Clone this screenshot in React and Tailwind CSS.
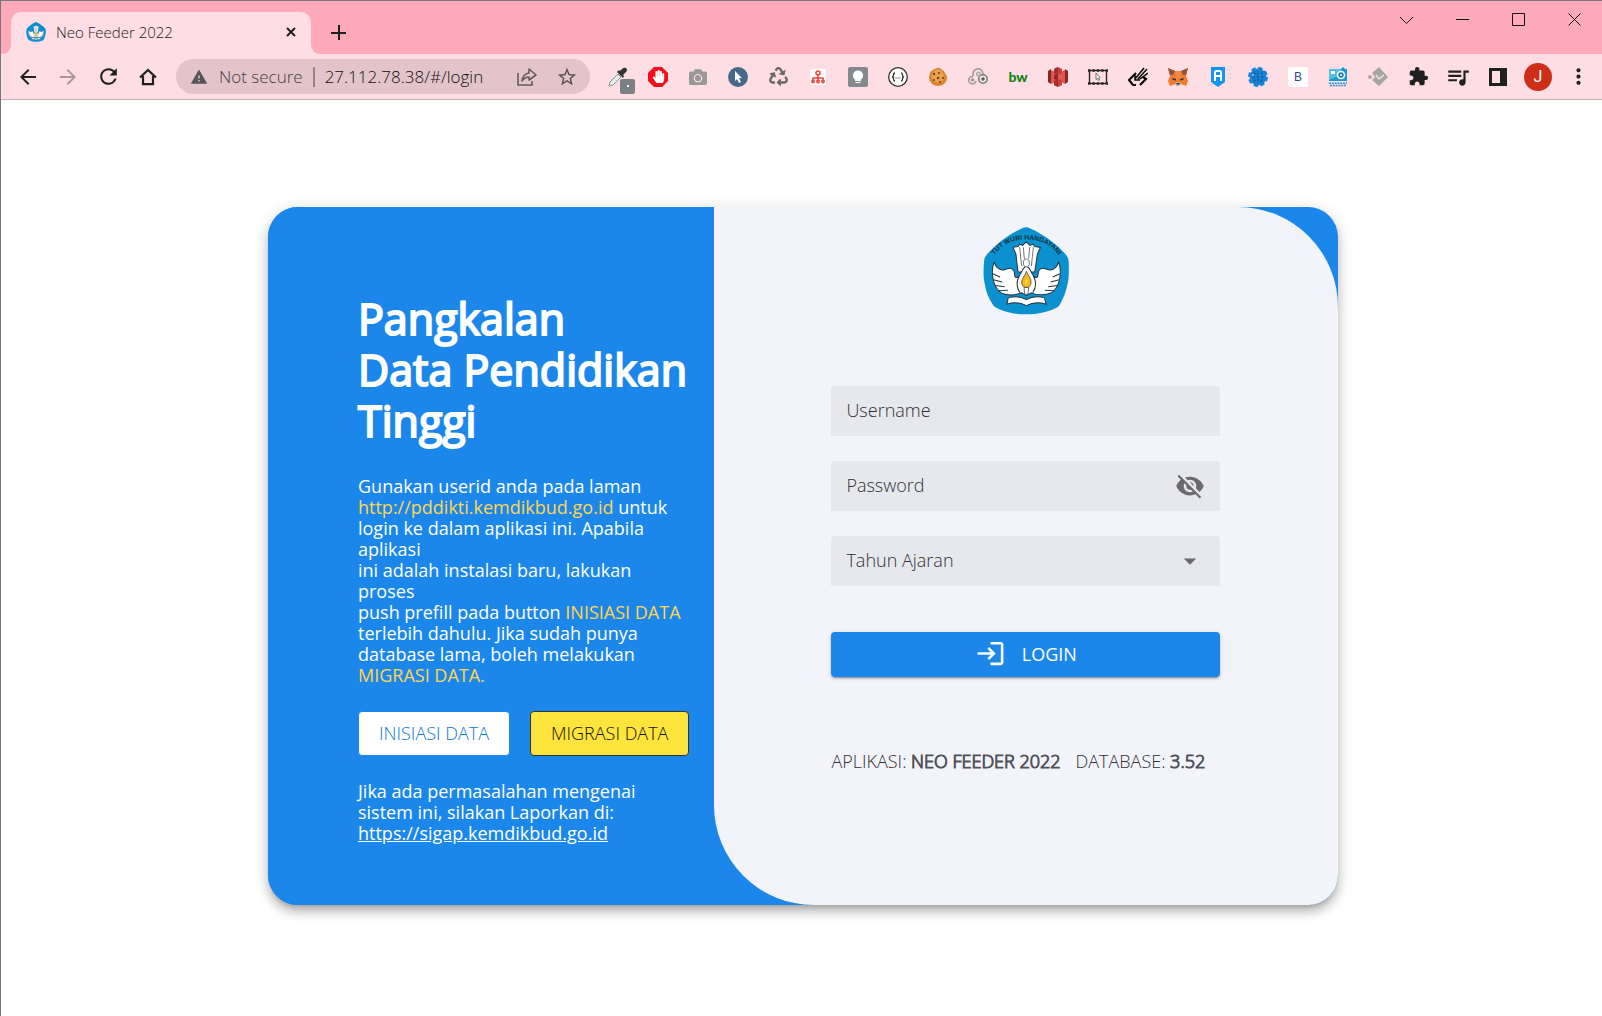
import { useState } from "react"
import {
  MdArrowBack,
  MdArrowDropDown,
  MdArrowForward,
  MdExtension,
  MdLogin,
  MdMoreVert,
  MdQueueMusic,
  MdRefresh,
  MdStarBorder,
  MdVisibility,
  MdVisibilityOff,
  MdWarning,
} from "react-icons/md"
import { FaCamera, FaHandPaper, FaRecycle } from "react-icons/fa"

function Logo({ className, label, motto }) {
  return (
    <svg viewBox="72 52 256 262" className={className} role="img" aria-label={label}>
      <path
        d="M186 57 Q200 49 214 57 C250 72 290 102 318 133 Q327 143 327 155 C328 180 328 200 325 216 C320 243 312 265 300 284 Q296 292 286 295 C260 307 235 312 200 312 C165 312 140 307 116 295 Q106 292 102 284 C88 265 80 243 76 216 C73 200 73 180 75 155 Q75 143 84 133 C112 102 150 72 186 57Z"
        fill="#0b90d0"
      />
      {motto && (
        <>
          <path id="motto" d="M98 152 C130 68 272 68 304 152" fill="none" />
          <text fontFamily="Liberation Sans" fontWeight="700" fontSize="20" fill="#12303f">
            <textPath href="#motto" startOffset="50%" textAnchor="middle">
              {motto}
            </textPath>
          </text>
        </>
      )}
      <g fill="#fff" stroke="#26323c" strokeWidth="3" strokeLinejoin="round">
        <path d="M161 112 L176 110 L181 103 L190 107 L201 96 L212 107 L221 103 L226 110 L243 113 L234 132 L226 186 L176 186 L170 132Z" />
        <path d="M105 156 C112 178 128 184 142 177 C154 171 166 177 166 192 C166 204 174 207 180 197 L192 176 L201 166 L210 176 L222 197 C228 207 236 204 236 192 C236 177 248 171 260 177 C276 184 290 178 297 156 C308 186 301 231 276 248 C256 257 231 255 216 248 L201 256 L187 248 C169 255 145 257 126 248 C101 231 94 186 105 156Z" />
        <path d="M143 282 L147 263 C165 258 185 259 201 268 C217 259 237 258 255 263 L260 282 C238 275 218 277 201 286 C184 277 164 275 143 282Z" />
        <path d="M194 232 H208 L206 252 H196Z" strokeWidth="2" />
        <ellipse cx="201" cy="159" rx="9" ry="12" strokeWidth="2" />
      </g>
      <g fill="none" stroke="#26323c" strokeWidth="3">
        <path d="M181 112 L187 168 M192 112 L195 146 M211 112 L208 146 M222 112 L216 168" strokeWidth="2" />
        <path d="M101 191 L123 201 M103 209 L129 216 M108 226 L136 230 M118 242 L146 240 M301 191 L279 201 M299 209 L273 216 M294 226 L266 230 M284 242 L256 240" />
        <path d="M182 248 Q166 224 180 197 M220 248 Q236 224 222 197" />
      </g>
      <path
        d="M201 184 C207 199 216 203 215 217 C214 229 207 232 201 232 C194 232 188 228 187 217 C187 204 197 199 201 184Z"
        fill="#f8b81f"
        stroke="#26323c"
        strokeWidth="2"
      />
      <path d="M201 205 Q208 216 201 224 Q195 217 201 205Z" fill="#ffdc55" />
    </svg>
  )
}

const extensions = [
  {
    name: "Color picker",
    icon: (
      <span className="relative block h-5 w-5">
        <svg viewBox="0 0 20 20" className="h-5 w-5">
          <path d="M1 19 L2 15 L10 7 L13 10 L5 18Z" fill="#e8efee" stroke="#86918f" />
          <path d="M9 5 L15 11 L16 9 L15 8 L18 5 Q20 3 18 1 Q16 0 14 2 L12 4 L11 3Z" fill="#333" />
        </svg>
        <span className="absolute top-3 left-3 flex h-[15px] w-[15px] items-center justify-center rounded-xs bg-[#7b8085]">
          <span className="h-[2px] w-[2px] bg-white" />
        </span>
      </span>
    ),
  },
  {
    name: "Ad blocker",
    icon: (
      <span className="relative flex h-5 w-5 items-center justify-center text-white">
        <svg viewBox="0 0 20 20" className="absolute h-5 w-5">
          <path d="M6 0H14L20 6V14L14 20H6L0 14V6Z" fill="#f70d1a" />
        </svg>
        <FaHandPaper size={13} className="relative" />
      </span>
    ),
  },
  { name: "Screenshot", icon: <FaCamera size={18} color="#999" /> },
  {
    name: "Cursor",
    icon: (
      <svg viewBox="0 0 20 20" className="h-5 w-5">
        <circle cx="10" cy="10" r="10" fill="#46698a" />
        <path d="M7 4 L14 11 L11 11 L13 15 L11 16 L9 12 L7 14Z" fill="#fff" />
      </svg>
    ),
  },
  { name: "Recycle", icon: <FaRecycle size={19} color="#6b6668" /> },
  {
    name: "Sitemap",
    icon: (
      <svg viewBox="0 0 16 16" className="h-4 w-4">
        <rect width="16" height="16" rx="2" fill="#fff" />
        <g fill="none" stroke="#ee4136" strokeWidth="1.5">
          <circle cx="8" cy="4" r="2" />
          <path d="M8 6V11M3 11V9H13V11" />
          <circle cx="3" cy="12.5" r="1.2" />
          <circle cx="8" cy="12.5" r="1.2" />
          <circle cx="13" cy="12.5" r="1.2" />
        </g>
      </svg>
    ),
  },
  {
    name: "Light switch",
    icon: (
      <span className="flex h-5 w-5 items-center justify-center rounded-xs bg-[#83898d]">
        <svg viewBox="0 0 20 20" className="h-5 w-5" fill="#fff">
          <path d="M10 3.5A5 5 0 0 1 13 12.5V14H7V12.5A5 5 0 0 1 10 3.5ZM7.5 15H12.5V16H7.5Z" />
        </svg>
      </span>
    ),
  },
  {
    name: "JSON viewer",
    icon: (
      <svg viewBox="0 0 20 20" className="h-5 w-5" fill="none" stroke="#333">
        <circle cx="10" cy="10" r="9.3" fill="#fff" strokeWidth="1.3" />
        <path d="M7 6Q5.5 6 5.5 8Q5.5 10 4 10Q5.5 10 5.5 12Q5.5 14 7 14M13 6Q14.5 6 14.5 8Q14.5 10 16 10Q14.5 10 14.5 12Q14.5 14 13 14" strokeWidth="1.3" />
        <path d="M7.5 11H8.5M9.5 11H10.5M11.5 11H12.5" />
      </svg>
    ),
  },
  {
    name: "Cookie editor",
    icon: (
      <svg viewBox="0 0 20 20" className="h-5 w-5">
        <path d="M9 1Q12 0 14 3Q16 3 17 6Q19 8 19 12Q17 19 10 19Q2 18 1 11Q1 3 9 1Z" fill="#db842f" />
        <path d="M7 3Q12 1 14 5Q17 8 16 12Q13 16 7 15Q2 11 4 7Z" fill="#eda14c" />
        <g fill="#70401d">
          <circle cx="6" cy="7" r="1.2" />
          <circle cx="11" cy="6" r="1" />
          <circle cx="10" cy="11" r="1.2" />
          <circle cx="15" cy="11" r="1.1" />
          <circle cx="6" cy="13" r="1" />
          <circle cx="12" cy="15" r="1" />
        </g>
      </svg>
    ),
  },
  {
    name: "Cloud rings",
    icon: (
      <svg viewBox="0 0 20 20" className="h-5 w-5" fill="none" strokeWidth="1.5">
        <path d="M8 14A3.7 3.7 0 1 1 5 9.5M5.5 9A5 5 0 1 1 15 7" stroke="#999" />
        <circle cx="15" cy="12" r="4.2" stroke="#777" fill="#f4e8eb" />
        <circle cx="10.5" cy="7" r="1.8" stroke="#aaa" />
        <circle cx="4.5" cy="13" r="1" stroke="#999" />
        <circle cx="15" cy="12" r="1" stroke="#555" />
      </svg>
    ),
  },
  {
    name: "BuiltWith",
    icon: <span className="font-[Lato] text-sm leading-5 font-black text-[#168414]">bw</span>,
  },
  {
    name: "S3 browser",
    icon: (
      <svg viewBox="0 0 20 20" className="h-5 w-5">
        <path d="M0 4L3 2V17L0 15ZM20 4L17 2V17L20 15Z" fill="#8c2726" />
        <path d="M3 3L7 5V15L3 17ZM17 3L13 5V15L17 17Z" fill="#dc5652" />
        <path d="M7 6H13V14H7Z" fill="#c03a37" />
        <path d="M10 0L14 2V6L10 7L6 6V2ZM10 20L14 18V14L10 13L6 14V18Z" fill="#ce3f3c" />
        <path d="M6 8L10 7V13L6 12Z" fill="#932a28" />
        <path d="M10 7L14 8V12L10 13Z" fill="#e25b56" />
        <path d="M10 0V7L6 6V2ZM10 20V13L6 14V18Z" fill="#a32f2d" />
      </svg>
    ),
  },
  {
    name: "Area capture",
    icon: (
      <svg viewBox="0 0 20 18" className="h-[18px] w-5">
        <rect x="1.5" y="2.5" width="17" height="13" fill="none" stroke="#282525" strokeWidth="1.4" />
        <path d="M0 2.5H20M0 15.5H20" stroke="#282525" strokeWidth="2.6" strokeDasharray="2.4 2" />
        <path d="M8 5L12 9.5L10.5 10L11.5 12L10.5 12.5L9.5 10.5L8 11.5Z" fill="#fff" stroke="#555" strokeWidth=".8" />
      </svg>
    ),
  },
  {
    name: "Quick edit",
    icon: (
      <svg viewBox="0 0 20 20" className="h-5 w-5" fill="none" stroke="#080808">
        <path d="M8 6L1 13L5 18H8M12 18L18 12L15 10" strokeWidth="2.2" />
        <path d="M7 12L16 1M10 12L19 2M12 12L20 6M7 8V13H12" strokeWidth="1.5" />
      </svg>
    ),
  },
  {
    name: "MetaMask",
    icon: (
      <svg viewBox="0 0 20 20" className="h-5 w-5">
        <path d="M0 1L7 4H13L20 1L18 9L20 14L18 19L13 17L11 19H9L7 17L2 19L0 14L2 9Z" fill="#f27c2c" />
        <path d="M0 1L7 4L5 8L2 8ZM20 1L13 4L15 8L18 8Z" fill="#92553a" />
        <path d="M7 4H13L12 12H8Z" fill="#e98945" />
        <path d="M4 11L8 12V13.5L5 13ZM16 11L12 12V13.5L15 13ZM8 16H12L11 18H9Z" fill="#293541" />
        <path d="M7 17L8 15H12L13 17L11 19H9Z" fill="#c5b7ab" />
        <path d="M8 16H12L11 17.5H9Z" fill="#263440" />
      </svg>
    ),
  },
  {
    name: "Ronin wallet",
    icon: (
      <svg viewBox="0 0 16 20" className="h-5 w-4">
        <path d="M1 0H15V15L8 20L1 15Z" fill="#1194f2" />
        <path d="M5 14V5L6 4H10L11 5V14M5 9H11" stroke="#fff" strokeWidth="2" fill="none" />
      </svg>
    ),
  },
  {
    name: "Web settings",
    icon: (
      <svg viewBox="0 0 20 20" className="h-5 w-5">
        <circle cx="10" cy="10" r="8.5" fill="none" stroke="#1585db" strokeWidth="3" strokeDasharray="4.2 2.47" />
        <circle cx="10" cy="10" r="8.4" fill="#1684d7" />
        <path d="M4 10H16M10 4V16M5 6Q10 9 15 6M5 14Q10 11 15 14M7 4Q4 10 7 16M13 4Q16 10 13 16" fill="none" stroke="#174f9d" strokeWidth=".6" />
        <circle cx="5" cy="8" r=".8" fill="#fff" />
        <circle cx="12" cy="8" r="1" fill="#18b77b" />
      </svg>
    ),
  },
  {
    name: "Bookmarks",
    icon: (
      <span className="flex h-5 w-5 items-center justify-center rounded-xs bg-white font-['Liberation_Sans'] text-xs leading-5 text-[#3b459d]">
        B
      </span>
    ),
  },
  {
    name: "Image capture",
    icon: (
      <svg viewBox="0 0 20 20" className="h-5 w-5">
        <path d="M1 2H13L15 0L17 2H19V14H1Z" fill="#159bd0" />
        <path d="M1 2H13V8L1 13Z" fill="#55bce2" />
        <rect x="3" y="4" width="4" height="3" fill="#fff" />
        <circle cx="13" cy="8" r="3.5" fill="#187bae" stroke="#fff" strokeWidth="1.6" />
        <circle cx="13" cy="8" r="1" fill="#fff" />
        <path d="M1 16.2H19M2 18.5H18" stroke="#2198c8" strokeWidth="1.6" strokeDasharray="2 .8" />
      </svg>
    ),
  },
  {
    name: "Redirect",
    icon: (
      <svg viewBox="0 0 20 20" className="h-5 w-5">
        <path d="M11 0L20 10L11 19L4 13L7 10L4 6Z" fill="#a5a5a5" />
        <path d="M8 8L11 12L16 8" fill="none" stroke="#f8dce2" strokeWidth="1.5" />
        <circle cx="2" cy="10" r="2" fill="#aaa" />
      </svg>
    ),
  },
  { name: "Extensions", icon: <MdExtension size={21} /> },
  { name: "Media control", icon: <MdQueueMusic size={26} /> },
  {
    name: "Side panel",
    icon: (
      <svg viewBox="0 0 18 18" className="h-[18px] w-[18px]">
        <path d="M0 0H18V18H0ZM3 3V15H11V3Z" fill="#202020" fillRule="evenodd" />
      </svg>
    ),
  },
]

function IconButton({ label, className = "", children }) {
  return (
    <button
      type="button"
      aria-label={label}
      className={`flex h-9 w-10 shrink-0 items-center justify-center ${className}`}
    >
      {children}
    </button>
  )
}

function TabStrip() {
  return (
    <div className="flex h-[53px] items-end bg-[#ffaaba] pl-[10px]">
      <div className="relative flex h-[42px] w-[300px] items-center rounded-t-[10px] bg-[#fedde4] pr-3 pb-[2px] pl-[15px]">
        <svg viewBox="0 0 10 10" className="absolute bottom-0 -left-[10px] h-[10px] w-[10px]">
          <path d="M10 0V10H0Q10 10 10 0Z" fill="#fedde4" />
        </svg>
        <svg viewBox="0 0 10 10" className="absolute -right-[10px] bottom-0 h-[10px] w-[10px]">
          <path d="M0 0V10H10Q0 10 0 0Z" fill="#fedde4" />
        </svg>
        <Logo className="h-5 w-5" label="Neo Feeder" />
        <span className="ml-[10px] flex-1 text-[15px] leading-5 font-light text-[#1f1a1c]">Neo Feeder 2022</span>
        <button type="button" aria-label="Close tab" className="p-[3px]">
          <svg viewBox="0 0 10 10" className="h-[10px] w-[10px]" stroke="#1f1f1f" strokeWidth="2">
            <path d="M1 1L9 9M9 1L1 9" />
          </svg>
        </button>
      </div>
      <button type="button" aria-label="New tab" className="mb-[14px] ml-5 flex h-[15px] w-[15px]">
        <svg viewBox="0 0 15 15" className="h-[15px] w-[15px]" stroke="#1f1f1f" strokeWidth="2">
          <path d="M8 0V15M0 8H15" />
        </svg>
      </button>
      <div className="ml-auto flex h-full items-start">
        {[
          ["Search tabs", "M0 4L6.5 10.5L13 4"],
          ["Minimize", "M0 6.5H13"],
          ["Maximize", "M.5 .5H12.5V12.5H.5Z"],
          ["Close window", "M.5 .5L12.5 12.5M12.5 .5L.5 12.5"],
        ].map(([label, d]) => (
          <button key={label} type="button" aria-label={label} className="flex h-[37px] w-14 items-center justify-center">
            <svg viewBox="0 0 13 13" className="h-[13px] w-[13px]" fill="none" stroke="#111">
              <path d={d} />
            </svg>
          </button>
        ))}
      </div>
    </div>
  )
}

function Toolbar() {
  return (
    <div className="flex h-[46px] items-center border-b border-[#c9afb6] bg-[#fedde4] pr-1 pl-[7px] text-[#202020]">
      <IconButton label="Back">
        <MdArrowBack size={24} />
      </IconButton>
      <IconButton label="Forward" className="text-[#ad989d]">
        <MdArrowForward size={24} />
      </IconButton>
      <IconButton label="Reload">
        <MdRefresh size={25} />
      </IconButton>
      <IconButton label="Home">
        <svg viewBox="0 0 18 18" className="h-[18px] w-[18px]" fill="none" stroke="currentColor" strokeWidth="2.2">
          <path d="M1 9.5L9 2L17 9.5M4 8V16.2H14V8" />
        </svg>
      </IconButton>
      <div className="mx-2 flex h-[35px] min-w-0 flex-1 items-center rounded-full bg-[#e3c4cb] pl-[14px]">
        <MdWarning size={18} color="#55565a" />
        <span className="ml-[11px] shrink-0 text-[17px] leading-6 font-light text-[#453c40]">Not secure</span>
        <span className="mx-[10px] h-5 w-[2px] shrink-0 bg-[#95868b]" />
        <input
          type="text"
          aria-label="Address"
          defaultValue="27.112.78.38/#/login"
          className="w-0 min-w-0 flex-1 bg-transparent text-[17px] leading-6 font-light text-[#100c0e] outline-none"
        />
        <button type="button" aria-label="Share" className="flex w-10 shrink-0 justify-center">
          <svg viewBox="0 0 20 18" className="h-[18px] w-5" fill="none" stroke="#665b5f" strokeWidth="1.6">
            <path d="M1 5V17H15V13" />
            <path d="M5 13Q6 6 12 5V1L19 7L12 12V9Q8 9 5 13Z" strokeLinejoin="round" />
          </svg>
        </button>
        <button type="button" aria-label="Bookmark this tab" className="mr-[3px] flex w-10 shrink-0 justify-center text-[#5a5155]">
          <MdStarBorder size={22} />
        </button>
      </div>
      {extensions.map((ext) => (
        <IconButton key={ext.name} label={ext.name}>
          {ext.icon}
        </IconButton>
      ))}
      <IconButton label="Profile">
        <span className="flex h-7 w-7 items-center justify-center rounded-full bg-[#cf2e18] font-[Roboto] text-base leading-7 text-white">
          J
        </span>
      </IconButton>
      <IconButton label="Menu">
        <MdMoreVert size={25} />
      </IconButton>
    </div>
  )
}

function InfoPanel() {
  return (
    <section className="w-5/12 bg-[#1c87eb] pt-[86px] pb-10 pl-[90px] text-lg leading-[21px] whitespace-nowrap text-white">
      <h1 className="text-[43px] leading-[51px] font-normal [-webkit-text-stroke:2px_white]">
        Pangkalan
        <br />
        Data Pendidikan
        <br />
        Tinggi
      </h1>
      <p className="mt-[30px]">
        Gunakan userid anda pada laman
        <br />
        <a href="http://pddikti.kemdikbud.go.id" className="text-[#ffd54f]">
          http://pddikti.kemdikbud.go.id
        </a>{" "}
        untuk
        <br />
        login ke dalam aplikasi ini. Apabila
        <br />
        aplikasi
        <br />
        ini adalah instalasi baru, lakukan
        <br />
        proses
        <br />
        push prefill pada button <span className="text-[#ffd54f]">INISIASI DATA</span>
        <br />
        terlebih dahulu. Jika sudah punya
        <br />
        database lama, boleh melakukan
        <br />
        <span className="text-[#ffd54f]">MIGRASI DATA.</span>
      </p>
      <div className="my-[25px] flex gap-5 font-light">
        <button type="button" className="h-[45px] rounded-[4px] border border-[#1c87eb] bg-white px-5 text-[#0b76dc]">
          INISIASI DATA
        </button>
        <button type="button" className="h-[45px] rounded-[4px] border border-[#333] bg-[#ffe43c] px-5 text-[#111]">
          MIGRASI DATA
        </button>
      </div>
      <p>
        Jika ada permasalahan mengenai
        <br />
        sistem ini, silakan Laporkan di:
        <br />
        <a href="https://sigap.kemdikbud.go.id" className="underline">
          https://sigap.kemdikbud.go.id
        </a>
      </p>
    </section>
  )
}

const fieldClass =
  "h-[50px] w-full rounded-t-[4px] bg-[#e7e8ed] px-[15px] pb-[2px] text-lg font-light text-[#2f3035] outline-none placeholder:text-[#2f3035]"

function LoginForm() {
  const [showPassword, setShowPassword] = useState(false)

  return (
    <section className="flex w-7/12 flex-col items-center rounded-tr-[100px] rounded-bl-[100px] bg-[#f3f4fa] pt-5">
      <Logo className="h-[88px] w-[86px]" label="Tut Wuri Handayani" motto="TUT WURI HANDAYANI" />
      <form onSubmit={(e) => e.preventDefault()} className="mt-[71px] flex w-full max-w-[389px] flex-col gap-[25px]">
        <input type="text" aria-label="Username" placeholder="Username" className={fieldClass} />
        <div className="relative">
          <input
            type={showPassword ? "text" : "password"}
            aria-label="Password"
            placeholder="Password"
            className={fieldClass}
          />
          <button
            type="button"
            aria-label="Show password"
            onClick={() => setShowPassword(!showPassword)}
            className="absolute inset-y-0 right-[15px] text-[#6b6b6e]"
          >
            {showPassword ? <MdVisibility size={30} /> : <MdVisibilityOff size={30} />}
          </button>
        </div>
        <div className="relative">
          <select aria-label="Tahun Ajaran" className={`${fieldClass} appearance-none`}>
            <option>Tahun Ajaran</option>
          </select>
          <MdArrowDropDown size={30} className="pointer-events-none absolute top-[10px] right-[15px] text-[#6b6b6e]" />
        </div>
        <button
          type="submit"
          className="mt-[21px] flex h-[45px] items-center justify-center gap-4 rounded-[4px] bg-[#1c87eb] pb-[2px] text-lg text-white shadow-[0_3px_1px_-2px_rgba(0,0,0,0.2),0_2px_2px_0_rgba(0,0,0,0.14),0_1px_5px_0_rgba(0,0,0,0.12)]"
        >
          <MdLogin size={31} />
          LOGIN
        </button>
      </form>
      <p className="mt-[74px] flex w-full max-w-[389px] gap-[15px] text-lg leading-[21px] font-light whitespace-nowrap text-[#2f3035]">
        <span>
          APLIKASI: <b className="font-light text-[#50525b] [-webkit-text-stroke:1px]">NEO FEEDER 2022</b>
        </span>
        <span>
          DATABASE: <b className="font-light text-[#50525b] [-webkit-text-stroke:1px]">3.52</b>
        </span>
      </p>
    </section>
  )
}

export default function App() {
  return (
    <div className="flex min-h-screen flex-col border-t border-l border-[#777] bg-white font-['Open_Sans',sans-serif]">
      <header>
        <TabStrip />
        <Toolbar />
      </header>
      <main className="flex flex-1 items-start justify-center pt-[107px] pr-6 pb-10 pl-[27px]">
        <div className="flex min-h-[698px] w-full max-w-[1070px] overflow-hidden rounded-[30px] bg-[#1c87eb] shadow-[0_5px_5px_-3px_rgba(0,0,0,0.2),0_8px_10px_1px_rgba(0,0,0,0.14),0_3px_14px_2px_rgba(0,0,0,0.12)]">
          <InfoPanel />
          <LoginForm />
        </div>
      </main>
    </div>
  )
}
